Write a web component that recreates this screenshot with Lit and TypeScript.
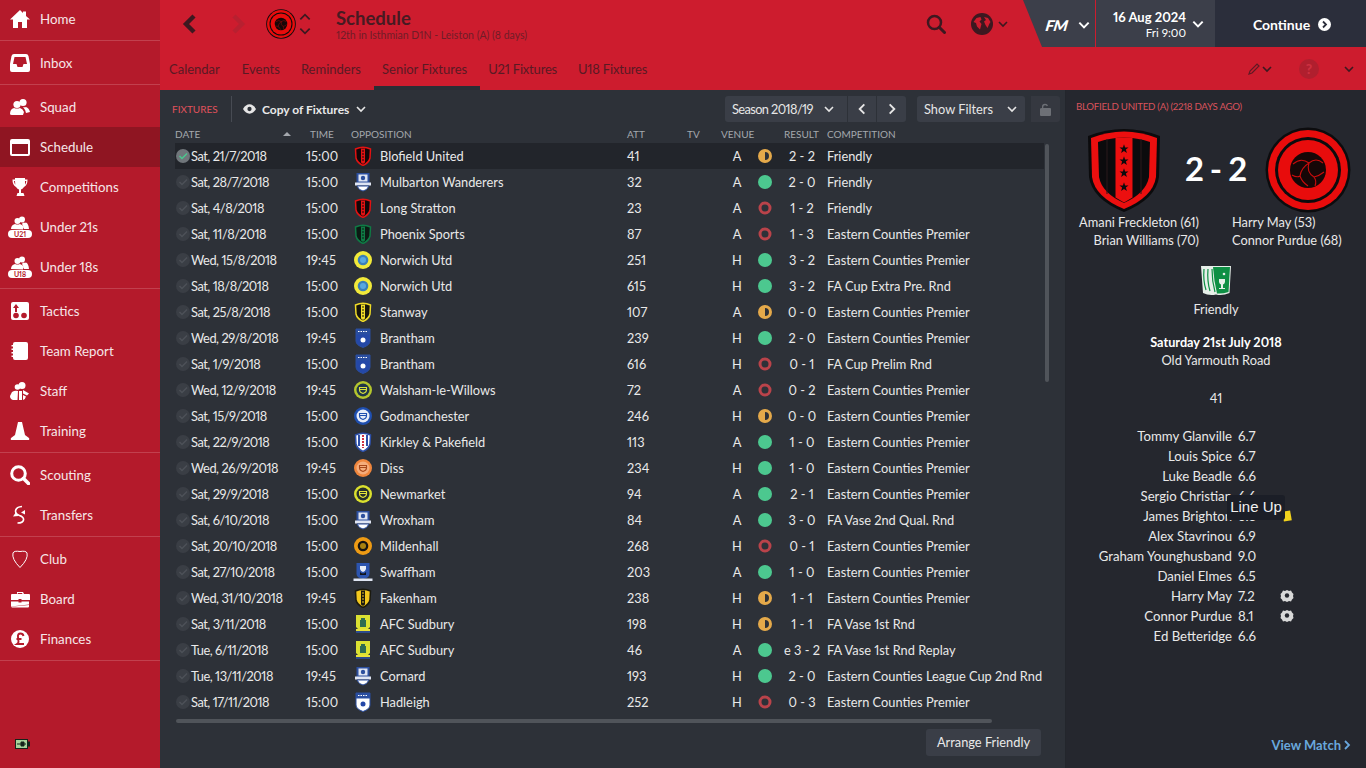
import { LitElement, html, css, svg } from 'lit';
import { customElement } from 'lit/decorators.js';

const chevron = (dir: 'down' | 'up' | 'left' | 'right', size = 12, color = 'currentColor', w = 2) => {
  const d = {
    down: 'M2 4l4 4 4-4',
    up: 'M2 8l4-4 4 4',
    left: 'M8 2L4 6l4 4',
    right: 'M4 2l4 4-4 4',
  }[dir];
  return html`<svg width=${size} height=${size} viewBox="0 0 12 12" fill="none" stroke=${color} stroke-width=${w}><path d=${d} /></svg>`;
};

const navIcons: Record<string, unknown> = {
  home: html`<svg width="20" height="20" viewBox="0 0 20 20" fill="#fff"><path d="M10 1L0 10.500h3V19h5v-6h4v6h5v-8.500h3L16 7V2.500h-3V4z"/></svg>`,
  inbox: html`<svg width="20" height="20" viewBox="0 0 20 20" fill="#fff"><path fill-rule="evenodd" d="M4 1h12q2 0 2.500 2L20 11v6q0 2-2 2H2q-2 0-2-2v-6l1.500-8Q2 1 4 1zm.500 3L3 11h3.500l1 3h5l1-3H17l-1.500-7z"/></svg>`,
  squad: html`<svg width="20" height="20" viewBox="0 0 20 20" fill="#fff"><circle cx="13" cy="5.500" r="3.600"/><circle cx="7" cy="7.500" r="3.600"/><path d="M0 17q0-5 4-6 3 1 6 0 3 1 4 4l-1 3H2q-2 0-2-1zM13 10q2 .5 3 0 3 1 4 5l-4 1q-1-4-3-6z"/></svg>`,
  schedule: html`<svg width="20" height="20" viewBox="0 0 20 20"><path fill="#fff" fill-rule="evenodd" d="M2 2h16q2 0 2 2v13q0 2-2 2H2q-2 0-2-2V4q0-2 2-2zm0 5v10h16V7z"/></svg>`,
  trophy: html`<svg width="20" height="20" viewBox="0 0 20 20" fill="#fff"><path fill-rule="evenodd" d="M5 1h10v1.500h2.500q.2 5.500-3.500 7.500-1.500 2-3 2.500V16h2.500l1 3H6.500l1-3H9v-3.500Q7.500 12 6 10 2.300 8 2.500 2.500H5zm0 3H4q.2 2.500 1.300 3.800zm10 0v3.800q1.100-1.300 1.300-3.800z"/></svg>`,
  tactics: html`<svg width="20" height="20" viewBox="0 0 20 20"><rect width="18" height="18" x="1" y="1" rx="2" fill="#fff"/><path d="M6 3l3 4H7v4H5V7H3z" fill="#b41a2b"/><circle cx="6" cy="14.500" r="2.800" fill="#b41a2b"/><circle cx="14" cy="14.500" r="2.800" fill="#b41a2b"/></svg>`,
  report: html`<svg width="20" height="20" viewBox="0 0 20 20" fill="#fff"><path d="M5 1h11q2 0 2 2v14q0 2-2 2H5q-2 0-2-2v-1H1.500v-1.500H3v-2H1.500V11H3V9H1.500V7.500H3v-2H1.500V4H3V3q0-2 2-2z"/></svg>`,
  staff: html`<svg width="20" height="20" viewBox="0 0 20 20" fill="#fff"><circle cx="12" cy="4.500" r="3.500"/><circle cx="7.500" cy="6" r="2.800"/><path d="M2 11q3-2 6-1l-.5 9H3q-3-1-3-4zM9 10h3v9H9zM13 9l6 3.500-2 2-4-2zM13 14l3 1.500q-.5 2.500-3 3.500z"/></svg>`,
  cone: html`<svg width="20" height="20" viewBox="0 0 20 20" fill="#fff"><path d="M8 1h4l3 13 4 3q1 2-1 2H2q-2 0-1-2l4-3z"/></svg>`,
  search: html`<svg width="20" height="20" viewBox="0 0 20 20" fill="none" stroke="#fff"><circle cx="8.500" cy="8.500" r="6.800" stroke-width="3"/><path d="M13.500 13.500l5 5" stroke-width="3.500" stroke-linecap="round"/></svg>`,
  transfers: html`<svg width="20" height="20" viewBox="0 0 20 20" fill="none" stroke="#fff" stroke-width="1.600"><path d="M12 1.500Q6 2 5.500 6q0 3 4 4.500 4.500 1.500 4 4.500-.5 3-6 3"/><path d="M3 11.500l5.500-.5-2.500-4zM15 9.500l-4-2 4-2.500z" fill="#fff" stroke="none"/></svg>`,
  club: html`<svg width="20" height="20" viewBox="0 0 20 20" fill="none" stroke="#fff" stroke-width="1"><path d="M10 2.500Q4 1.500 3 4q-1.500 6 7 14.500Q18.500 10 17 4q-1-2.500-7-1.500z"/></svg>`,
  board: html`<svg width="20" height="20" viewBox="0 0 20 20" fill="#fff"><path fill-rule="evenodd" d="M7 3h6l1 2h5q1 0 1 1v5H11.500v-1h-3v1H1V6q0-1 1-1h5zm1 1l-.5 1h5L12 4zM1 12.500h7.500v1h3v-1H19v3L1 17.500zM1 17.800l18-1.800v1.500q0 1-1 1H2z"/></svg>`,
  finances: html`<svg width="20" height="20" viewBox="0 0 20 20"><circle cx="10" cy="10" r="9" fill="#fff"/><path d="M13.500 7Q13 4.500 10.500 4.500 7.500 4.500 8 8l.5 5q0 1-1.500 2h7M6.500 10h5" fill="none" stroke="#b41a2b" stroke-width="1.900"/></svg>`,
};

const youthIcon = (label: string) => html`
  <svg width="24" height="22" viewBox="0 0 24 22" fill="#fff">
    <circle cx="14" cy="3.500" r="3"/><circle cx="9.500" cy="5" r="3"/>
    <path d="M3 13q0-4 4-5 2.500 1 5 0 3 1 3.500 3l-.5 2.500zM15 6.500q2 .5 3 0 2.500 1 3 6.500h-5q-.5-3-2-5z"/>
    <rect y="14" width="24" height="8" rx="4"/>
    <text x="12" y="20.500" text-anchor="middle" font-size="7" font-weight="700" font-family="Lato, sans-serif" fill="#b41a2b">${label}</text>
  </svg>`;

const shieldPath = 'M2.500 3Q10 -.5 17.500 3L17 12Q16 16.500 10 19.500 4 16.500 3 12Z';

type Crest = (typeof crests)[keyof typeof crests];

const stripeShield = (edge: string, fill: string, stripe: string) => html`
  <svg width="20" height="20" viewBox="0 0 20 20">
    <path d=${shieldPath} fill=${fill} stroke=${edge} stroke-width="1.500"/>
    <path d="M8 2.500h4v14l-2 1.500-2-1.500z" fill=${stripe}/>
    <path d="M9 5h2M9 8h2M9 11h2M9 14h2" stroke=${fill} stroke-width="1"/>
  </svg>`;

const ring = (outer: string, mid: string, inner: string) => html`
  <svg width="20" height="20" viewBox="0 0 20 20">
    <circle cx="10" cy="10" r="9" fill=${outer}/>
    <circle cx="10" cy="10" r="5.300" fill=${mid}/>
    <circle cx="10" cy="10" r="3" fill=${inner}/>
  </svg>`;

const ringCup = (outer: string, inner: string, cup: string) => html`
  <svg width="20" height="20" viewBox="0 0 20 20">
    <circle cx="10" cy="10" r="9" fill=${outer}/>
    <circle cx="10" cy="10" r="6.500" fill=${inner}/>
    <path d="M6.500 7.500h7v2.500q0 2.500-3.500 3.500-3.500-1-3.500-3.500z" fill="none" stroke=${cup} stroke-width="1.100"/>
    <path d="M6.500 9.500h7" stroke=${cup} stroke-width="1"/>
  </svg>`;

const bannerCrest = html`
  <svg width="20" height="20" viewBox="0 0 20 20">
    <path d="M3.500 1h13v10h-13z" fill="#2c4f9e"/>
    <rect x="5.500" y="2.500" width="9" height="7" fill="#dfe5f3"/>
    <circle cx="10" cy="6" r="2.200" fill="#2c4f9e"/>
    <path d="M2 10.500h16v3H2z" fill="#dfe5f3"/>
    <path d="M4 14h12l-2.500 3.500-3.500 1.500-3.500-1.500z" fill="#fff" stroke="#2c4f9e"/>
  </svg>`;

const blueShield = (top: string, body: string, dot: string) => html`
  <svg width="20" height="20" viewBox="0 0 20 20">
    <path d="M3 1h14v12q0 4-7 6.500Q3 17 3 13z" fill=${body} stroke="#2a4ea0"/>
    <path d="M3 1h14v5.500H3z" fill=${top}/>
    <path d="M5 3.500h10" stroke="#fff" stroke-dasharray="1.500 1"/>
    <circle cx="10" cy="12" r="2.500" fill=${dot}/>
  </svg>`;

const crests = {
  blofield: stripeShield('#e31212', '#120608', '#e31212'),
  longStratton: stripeShield('#e31212', '#120608', '#e31212'),
  phoenix: stripeShield('#0f7a45', '#0c1a14', '#0f7a45'),
  stanway: stripeShield('#f0dc28', '#16150c', '#f0dc28'),
  fakenham: stripeShield('#1b1a10', '#f2c81e', '#1b1a10'),
  mulbarton: bannerCrest,
  norwich: ring('#f2ea3a', '#3a7fb8', '#58a8e0'),
  brantham: blueShield('#2a4ea0', '#2448a8', '#fff'),
  hadleigh: blueShield('#2a4ea0', '#fff', '#2448a8'),
  walsham: ringCup('#b4c62e', '#1f3648', '#d8e23c'),
  god: ringCup('#1f4fb0', '#e8edf8', '#1f4fb0'),
  diss: ringCup('#f0863c', '#f5ad7b', '#a8481a'),
  newmarket: ringCup('#dbe12e', '#27302c', '#e6e63a'),
  mildenhall: ring('#ee9b14', '#181410', '#a9810f'),
  kirkley: html`
    <svg width="20" height="20" viewBox="0 0 20 20">
      <path d=${shieldPath} fill="#fff" stroke="#2c4fa8" stroke-width="1.500"/>
      <path d="M6 3v11M14 3v11" stroke="#2c4fa8" stroke-width="2"/>
      <path d="M10 3v13" stroke="#d03040" stroke-width="2" stroke-dasharray="2 1"/>
    </svg>`,
  swaffham: html`
    <svg width="20" height="20" viewBox="0 0 20 20">
      <path d="M3.500 1h13v11q0 4-6.500 5-6.500-1-6.500-5z" fill="#2c54ae"/>
      <path d="M7 4h6v3q-1 3-3 3t-3-3z" fill="#e8edf8"/>
      <path d="M7 10q3 3 6 0v3H7z" fill="#10131c"/>
      <path d="M.5 16.500h19v2.500H.5z" fill="#dfe5f3"/>
    </svg>`,
  sudbury: html`
    <svg width="20" height="20" viewBox="0 0 20 20">
      <path d="M3 1h14v12l-3 3H6l-3-3z" fill="#dbe132"/>
      <path d="M8 4h4v2h1v7H7V6h1z" fill="#2e6b52"/>
      <path d="M3 15h14v2H3z" fill="#e8e23a"/>
      <path d="M3 17h14v2H3z" fill="#2c4a8c"/>
    </svg>`,
};

type Row = [string, string, Crest, string, string, 'A' | 'H', 'w' | 'd' | 'l', string, string];

const EC = 'Eastern Counties Premier';
const rows: Row[] = [
  ['Sat, 21/7/2018', '15:00', crests.blofield, 'Blofield United', '41', 'A', 'd', '2 - 2', 'Friendly'],
  ['Sat, 28/7/2018', '15:00', crests.mulbarton, 'Mulbarton Wanderers', '32', 'A', 'w', '2 - 0', 'Friendly'],
  ['Sat, 4/8/2018', '15:00', crests.longStratton, 'Long Stratton', '23', 'A', 'l', '1 - 2', 'Friendly'],
  ['Sat, 11/8/2018', '15:00', crests.phoenix, 'Phoenix Sports', '87', 'A', 'l', '1 - 3', EC],
  ['Wed, 15/8/2018', '19:45', crests.norwich, 'Norwich Utd', '251', 'H', 'w', '3 - 2', EC],
  ['Sat, 18/8/2018', '15:00', crests.norwich, 'Norwich Utd', '615', 'H', 'w', '3 - 2', 'FA Cup Extra Pre. Rnd'],
  ['Sat, 25/8/2018', '15:00', crests.stanway, 'Stanway', '107', 'A', 'd', '0 - 0', EC],
  ['Wed, 29/8/2018', '19:45', crests.brantham, 'Brantham', '239', 'H', 'w', '2 - 0', EC],
  ['Sat, 1/9/2018', '15:00', crests.brantham, 'Brantham', '616', 'H', 'l', '0 - 1', 'FA Cup Prelim Rnd'],
  ['Wed, 12/9/2018', '19:45', crests.walsham, 'Walsham-le-Willows', '72', 'A', 'l', '0 - 2', EC],
  ['Sat, 15/9/2018', '15:00', crests.god, 'Godmanchester', '246', 'H', 'd', '0 - 0', EC],
  ['Sat, 22/9/2018', '15:00', crests.kirkley, 'Kirkley & Pakefield', '113', 'A', 'w', '1 - 0', EC],
  ['Wed, 26/9/2018', '19:45', crests.diss, 'Diss', '234', 'H', 'w', '1 - 0', EC],
  ['Sat, 29/9/2018', '15:00', crests.newmarket, 'Newmarket', '94', 'A', 'w', '2 - 1', EC],
  ['Sat, 6/10/2018', '15:00', crests.mulbarton, 'Wroxham', '84', 'A', 'w', '3 - 0', 'FA Vase 2nd Qual. Rnd'],
  ['Sat, 20/10/2018', '15:00', crests.mildenhall, 'Mildenhall', '268', 'H', 'l', '0 - 1', EC],
  ['Sat, 27/10/2018', '15:00', crests.swaffham, 'Swaffham', '203', 'A', 'w', '1 - 0', EC],
  ['Wed, 31/10/2018', '19:45', crests.fakenham, 'Fakenham', '238', 'H', 'd', '1 - 1', EC],
  ['Sat, 3/11/2018', '15:00', crests.sudbury, 'AFC Sudbury', '198', 'H', 'd', '1 - 1', 'FA Vase 1st Rnd'],
  ['Tue, 6/11/2018', '15:00', crests.sudbury, 'AFC Sudbury', '46', 'A', 'w', 'e 3 - 2', 'FA Vase 1st Rnd Replay'],
  ['Tue, 13/11/2018', '19:45', crests.mulbarton, 'Cornard', '193', 'H', 'w', '2 - 0', 'Eastern Counties League Cup 2nd Rnd'],
  ['Sat, 17/11/2018', '15:00', crests.hadleigh, 'Hadleigh', '252', 'H', 'l', '0 - 3', EC],
];

const players: [string, string, string?][] = [
  ['Tommy Glanville', '6.7'],
  ['Louis Spice', '6.7'],
  ['Luke Beadle', '6.6'],
  ['Sergio Christian', '6.6'],
  ['James Brighton', '6.8', 'card'],
  ['Alex Stavrinou', '6.9'],
  ['Graham Younghusband', '9.0'],
  ['Daniel Elmes', '6.5'],
  ['Harry May', '7.2', 'ball'],
  ['Connor Purdue', '8.1', 'ball'],
  ['Ed Betteridge', '6.6'],
];

const navGroups: { label: string; icon: unknown; active?: boolean }[][] = [
  [{ label: 'Home', icon: navIcons.home }],
  [{ label: 'Inbox', icon: navIcons.inbox }],
  [
    { label: 'Squad', icon: navIcons.squad },
    { label: 'Schedule', icon: navIcons.schedule, active: true },
    { label: 'Competitions', icon: navIcons.trophy },
    { label: 'Under 21s', icon: youthIcon('U21') },
    { label: 'Under 18s', icon: youthIcon('U18') },
  ],
  [
    { label: 'Tactics', icon: navIcons.tactics },
    { label: 'Team Report', icon: navIcons.report },
    { label: 'Staff', icon: navIcons.staff },
    { label: 'Training', icon: navIcons.cone },
  ],
  [
    { label: 'Scouting', icon: navIcons.search },
    { label: 'Transfers', icon: navIcons.transfers },
  ],
  [
    { label: 'Club', icon: navIcons.club },
    { label: 'Board', icon: navIcons.board },
    { label: 'Finances', icon: navIcons.finances },
  ],
];

const ballBadge = (size: number) => html`
  <svg width=${size} height=${size} viewBox="0 0 86 86">
    <circle cx="43" cy="43" r="42.500" fill="#0c0c0e"/>
    <circle cx="43" cy="43" r="40" fill="#e80c0c"/>
    <circle cx="43" cy="43" r="33" fill="#0c0c0e"/>
    <circle cx="43" cy="43" r="30" fill="#e80c0c"/>
    <circle cx="43" cy="43" r="18" fill="#160707"/>
    <g fill="none" stroke="#c80c0c" stroke-width="1.100">
      <path d="M28 37q8-7 16-1 7-6 14 0M44 36q-3 9 5 14 3 4 1 9M49 50q5-1 10-5M44 36q-8 5-9 13-3 2-8-1M35 49q2 6 8 10"/>
    </g>
  </svg>`;

const starsBadge = html`
  <svg width="76" height="86" viewBox="0 0 76 86">
    <path d="M2 9Q38 -5 74 9L73 50Q70 72 38 85 6 72 3 50Z" fill="#0b0b0d"/>
    <path d="M5 11Q38 -2 71 11L70 50Q67 70 38 82 9 70 6 50Z" fill="#ec0f0f"/>
    <path d="M12 15Q38 6 64 15L63 50Q60 66 38 76 16 66 13 50Z" fill="#0b0b0d"/>
    <path d="M21 12v55M55 12v55" stroke="#2a1a1c" fill="none"/>
    <path d="M29.500 10.500h17v60l-8.500 5-8.500-5z" fill="#ec0f0f"/>
    ${[22, 34, 46, 60].map(
      (y) => svg`<path transform="translate(38 ${y}) scale(.62)" d="M0-7.500l1.800 5h5.500L3 .8 4.700 6.500 0 3.200-4.700 6.500-3 .8-7.300-2.500h5.500z" fill="#0b0b0d"/>`
    )}
  </svg>`;

const friendlyBadge = html`
  <svg width="32" height="31" viewBox="0 0 32 31">
    <path d="M1 1h30l-1.500 27q-7 3-13.500 1.500Q9 31 3 28z" fill="#e7efe9"/>
    <path d="M13 2h17l-1.500 25q-6 2-11.500 1.500-3-12-4-26.500z" fill="#0e8f44"/>
    <path d="M4 4q-1 12 2 21M8 4q-1 12 2 22M12 4q0 12 3 23" fill="none" stroke="#0e8f44" stroke-width="1.200"/>
    <path d="M19 14h6v3q-.5 2-2 2.500V23h2v1h-6v-1h2v-3.500q-1.500-.5-2-2.500z" fill="#e7efe9"/>
    <circle cx="24" cy="9" r="1.300" fill="#e7efe9"/>
  </svg>`;

const miniBall = html`<svg width="14" height="14" viewBox="0 0 14 14"><path d="M7 1l2 1 2-.5 1 2 1.500 1.500-.5 2 .5 2-1.500 1.500-1 2-2-.5-2 1-2-1-2 .5-1-2L.500 9l.5-2-.5-2L2 3.500l1-2 2 .5z" fill="#d8d8d8"/><circle cx="7" cy="6.500" r="2.200" fill="#25272e"/></svg>`;

@customElement('fm-sidebar')
class FmSidebar extends LitElement {
  static styles = css`
    :host {
      display: flex;
      flex-direction: column;
      width: 160px;
      height: 768px;
      background: #b41a2b;
      overflow: hidden;
    }
    .group {
      padding: 2px 0 1px;
      border-bottom: 1px solid #c2404e;
    }
    .group:first-child {
      margin-top: -1px;
      padding-top: 0;
    }
    .group:last-of-type {
      border-bottom: none;
    }
    .item {
      display: flex;
      align-items: center;
      height: 40px;
      color: #f6e6e8;
      font-size: 13.300px;
    }
    .item.active {
      background: #8f1522;
    }
    .icon {
      width: 40px;
      display: flex;
      justify-content: center;
      flex: none;
    }
    .battery {
      margin-top: auto;
      padding: 0 0 19px 15px;
      line-height: 0;
    }
  `;

  render() {
    return html`
      ${navGroups.map(
        (group) => html`<div class="group">
          ${group.map(
            (it) => html`<div class="item ${it.active ? 'active' : ''}"><span class="icon">${it.icon}</span>${it.label}</div>`
          )}
        </div>`
      )}
      <div class="battery">
        <svg width="15" height="10" viewBox="0 0 15 10">
          <rect width="13" height="10" fill="#14241a"/>
          <rect x="1" y="1" width="11" height="8" fill="#a7d39b"/>
          <rect x="13" y="2.500" width="2" height="5" fill="#14241a"/>
          <path d="M2 5h9M6 3h3v4H6z" stroke="#14241a" fill="#14241a"/>
        </svg>
      </div>
    `;
  }
}

@customElement('fm-header')
class FmHeader extends LitElement {
  static styles = css`
    :host {
      display: block;
      background: #cd1c2e;
      height: 90px;
      color: #3a1a20;
    }
    .top {
      display: flex;
      height: 50px;
    }
    .nav {
      display: flex;
      align-items: center;
      padding: 0 0 3px 18px;
    }
    .forward {
      margin-left: 24px;
      margin-right: 16px;
      line-height: 0;
    }
    .updown {
      display: flex;
      flex-direction: column;
      margin-left: 2px;
      line-height: 0;
    }
    .title {
      margin-left: 24px;
      padding-top: 8px;
    }
    h1 {
      margin: 0;
      font-size: 18.500px;
      font-weight: 700;
      line-height: 21px;
      color: #471a22;
    }
    .sub {
      font-size: 10.500px;
      line-height: 13px;
      margin-top: 0;
      color: #701c28;
    }
    .tools {
      margin-left: auto;
      display: flex;
      align-items: center;
      gap: 25px;
      padding-bottom: 3px;
      margin-right: 14px;
    }
    .globe {
      display: flex;
      align-items: center;
      gap: 4px;
    }
    .status {
      display: flex;
      height: 47px;
      width: 343px;
      color: #fff;
    }
    .fm {
      width: 72px;
      padding: 2px 0 0 23px;
      box-sizing: border-box;
      background: #3c3f4a;
      clip-path: polygon(0 0, 100% 0, 100% 100%, 19px 100%);
      display: flex;
      align-items: center;
      gap: 9px;
      font-size: 15px;
      font-weight: 900;
    }
    .fm i {
      display: inline-block;
      font-style: normal;
      transform: skewX(-16deg);
      letter-spacing: -0.500px;
    }
    .date {
      width: 119px;
      margin-left: 1px;
      background: #3c3f4a;
      display: flex;
      align-items: center;
      justify-content: flex-end;
      gap: 5px;
      padding: 1px 10px 0 0;
      box-sizing: border-box;
    }
    .date div {
      text-align: right;
    }
    .date b {
      display: block;
      font-size: 13px;
      line-height: 17px;
    }
    .date span {
      font-size: 11.500px;
      line-height: 14px;
      display: block;
    }
    .continue {
      flex: 1;
      background: #2b2e3b;
      display: flex;
      align-items: center;
      justify-content: center;
      gap: 8px;
      font-size: 14px;
      font-weight: 700;
      padding: 2px 0 0 3px;
    }
    .bottom {
      display: flex;
      height: 40px;
    }
    .tab {
      display: flex;
      align-items: center;
      padding: 0 13px 2px 8px;
      font-size: 13px;
      color: #591a24;
      box-sizing: border-box;
    }
    .tab:first-child {
      margin-left: 1px;
      padding-right: 14px;
    }
    .tab.num {
      letter-spacing: -0.200px;
    }
    .tab.on {
      border-bottom: 4px solid #2a2d35;
      padding-top: 2px;
      padding-bottom: 0;
    }
    .side {
      margin-left: auto;
      display: flex;
      align-items: center;
      padding: 0 11px 2px 0;
    }
    .pencil {
      display: flex;
      align-items: center;
      gap: 1px;
      margin-right: 26px;
    }
    .help {
      width: 20px;
      height: 20px;
      border-radius: 50%;
      background: #b01f2e;
      color: #cd3040;
      font-size: 14px;
      font-weight: 900;
      text-align: center;
      line-height: 20px;
      margin-right: 24px;
    }
  `;

  render() {
    const dark = '#3d1820';
    return html`
      <div class="top">
        <div class="nav">
          ${chevron('left', 24, dark, 2.200)}
          <span class="forward">${chevron('right', 24, '#b82030', 2.200)}</span>
          ${ballBadge(30)}
          <span class="updown">${chevron('up', 14, dark, 1.500)}${chevron('down', 14, dark, 1.500)}</span>
        </div>
        <div class="title">
          <h1>Schedule</h1>
          <div class="sub">12th in Isthmian D1N - Leiston (A) (8 days)</div>
        </div>
        <div class="tools">
          <svg width="20" height="20" viewBox="0 0 20 20" fill="none" stroke=${dark}><circle cx="8.500" cy="8.500" r="6.500" stroke-width="2.500"/><path d="M13.500 13.500l5 5" stroke-width="3" stroke-linecap="round"/></svg>
          <span class="globe">
            <svg width="22" height="22" viewBox="0 0 22 22"><circle cx="11" cy="11" r="11" fill=${dark}/><path d="M2.500 9l3-4 4-1 1 2.500-2 2 2 2.500-1.500 5.500-3-3-1-3.500zM13 4l4 1 2.500 4-1 1.500-2 4.500-2-3-1.500-3.500 2-1.500z" fill="#cd1c2e"/></svg>
            ${chevron('down', 12, dark, 1.600)}
          </span>
        </div>
        <div class="status">
          <div class="fm"><i>FM</i> ${chevron('down', 14, '#fff', 1.700)}</div>
          <div class="date">
            <div><b>16 Aug 2024</b><span>Fri 9:00</span></div>
            ${chevron('down', 14, '#fff', 1.700)}
          </div>
          <div class="continue">
            Continue
            <svg width="13" height="13" viewBox="0 0 13 13"><circle cx="6.500" cy="6.500" r="6.500" fill="#fff"/><path d="M5 3.500l3 3-3 3" fill="none" stroke="#2b2e3b" stroke-width="1.800"/></svg>
          </div>
        </div>
      </div>
      <div class="bottom">
        <div class="tab">Calendar</div>
        <div class="tab">Events</div>
        <div class="tab">Reminders</div>
        <div class="tab on">Senior Fixtures</div>
        <div class="tab num">U21 Fixtures</div>
        <div class="tab num">U18 Fixtures</div>
        <div class="side">
          <span class="pencil">
            <svg width="12" height="12" viewBox="0 0 12 12" fill="none" stroke="#5f1a24" stroke-width="1.200"><path d="M1 11l1-3 7-7 2 2-7 7z"/></svg>
            ${chevron('down', 12, dark, 1.600)}
          </span>
          <span class="help">?</span>
          ${chevron('down', 12, dark, 1.600)}
        </div>
      </div>
    `;
  }
}

@customElement('fm-fixtures')
class FmFixtures extends LitElement {
  static styles = css`
    :host {
      display: flex;
      flex-direction: column;
      flex: 1;
      min-width: 0;
      background: #2d3138;
      color: #e9e9e9;
      font-size: 12.800px;
      border-right: 1px solid #23262c;
      position: relative;
    }
    .toolbar {
      display: flex;
      align-items: center;
      height: 38px;
      padding: 0 5px 0 12px;
      box-sizing: border-box;
    }
    .label {
      color: #e0525c;
      font-size: 10px;
      width: 59px;
    }
    .view {
      display: flex;
      align-items: center;
      height: 26px;
      border-left: 1px solid #474b53;
      padding-left: 11px;
      font-size: 12px;
      font-weight: 700;
      gap: 6px;
    }
    .controls {
      margin-left: auto;
      display: flex;
      gap: 6px;
    }
    .btns {
      display: flex;
      margin-right: 5px;
    }
    .btn {
      display: flex;
      align-items: center;
      justify-content: center;
      height: 26px;
      background: #3a3e47;
      font-size: 12.800px;
      color: #e6e6e6;
      border-right: 1px solid #2d3138;
      box-sizing: border-box;
    }
    .btn:first-child {
      border-radius: 3px 0 0 3px;
    }
    .btn:last-child {
      border-radius: 0 3px 3px 0;
      border-right: none;
    }
    .season {
      width: 123px;
      justify-content: space-between;
      padding: 0 12px 0 7px;
      letter-spacing: -0.600px;
    }
    .arrow {
      width: 29px;
    }
    .filters {
      width: 108px;
      border-radius: 3px;
      gap: 13px;
      border-right: none;
    }
    .lock {
      width: 29px;
      border-radius: 3px;
      border-right: none;
      background: #353840;
    }
    .row,
    .head {
      display: grid;
      grid-template-columns: 16px 115px 45px 29px 247px 60px 34px 32px 24px 50px 1fr;
      align-items: center;
      margin-left: 15px;
      width: 869px;
      box-sizing: border-box;
    }
    .head {
      margin-top: -2px;
      height: 17px;
      padding-bottom: 2px;
      font-size: 10px;
      color: #a4a8ad;
    }
    .head .date {
      grid-column: span 2;
      position: relative;
    }
    .sort {
      position: absolute;
      left: 108px;
      top: 4px;
      border: 4px solid transparent;
      border-top: none;
      border-bottom: 4px solid #a4a8ad;
    }
    .head .time {
      padding-left: 4px;
    }
    .head .res {
      padding-left: 7px;
    }
    .head .span2 {
      grid-column: span 2;
    }
    .row {
      height: 26px;
      padding-bottom: 1px;
    }
    .row.sel {
      background: #22252b;
    }
    .when {
      letter-spacing: -0.450px;
    }
    .check {
      width: 14px;
      height: 14px;
      border-radius: 50%;
      background: #3a3e45;
      display: flex;
      align-items: center;
      justify-content: center;
      margin-left: 1px;
    }
    .sel .check {
      background: #70767b;
    }
    .crest {
      line-height: 0;
      margin-left: 2px;
    }
    .venue,
    .result,
    .dot {
      text-align: center;
    }
    .dot {
      line-height: 0;
      display: flex;
      justify-content: center;
    }
    .comp {
      white-space: nowrap;
    }
    .vscroll {
      position: absolute;
      left: 885px;
      top: 54px;
      width: 4px;
      height: 238px;
      background: #50545a;
      border-radius: 2px;
    }
    .hscroll {
      margin: 4px 0 0 16px;
      width: 816px;
      height: 4px;
      background: #50545a;
      border-radius: 2px;
    }
    .footer {
      display: flex;
      justify-content: flex-end;
      padding: 6px 24px 0 0;
    }
    .arrange {
      width: 115px;
      height: 27px;
      line-height: 27px;
      background: #3a3e47;
      text-align: center;
      border-radius: 3px;
    }
  `;

  resultDot(kind: 'w' | 'd' | 'l') {
    if (kind === 'w') return html`<svg width="14" height="14"><circle cx="7" cy="7" r="7" fill="#4cc88f"/></svg>`;
    if (kind === 'l') return html`<svg width="14" height="14"><circle cx="7" cy="7" r="5" fill="none" stroke="#b9434a" stroke-width="3"/></svg>`;
    return html`<svg width="14" height="14"><circle cx="7" cy="7" r="7" fill="#e4a94a"/><path d="M7 3a4 4 0 0 1 0 8z" fill="#2d3138"/></svg>`;
  }

  render() {
    return html`
      <div class="toolbar">
        <span class="label">FIXTURES</span>
        <span class="view">
          <svg width="13" height="10" viewBox="0 0 14 10"><path d="M0 5q3-5 7-5t7 5q-3 5-7 5T0 5z" fill="#e6e6e6"/><circle cx="7" cy="5" r="2.300" fill="#2d3138"/></svg>
          <span>Copy of Fixtures</span>${chevron('down', 12, '#e6e6e6', 1.600)}
        </span>
        <div class="controls">
          <div class="btns">
            <div class="btn season">Season 2018/19 ${chevron('down', 12, '#e6e6e6', 1.600)}</div>
            <div class="btn arrow">${chevron('left', 14, '#e6e6e6', 1.600)}</div>
            <div class="btn arrow">${chevron('right', 14, '#e6e6e6', 1.600)}</div>
          </div>
          <div class="btn filters">Show Filters ${chevron('down', 12, '#e6e6e6', 1.600)}</div>
          <div class="btn lock">
            <svg width="11" height="13" viewBox="0 0 11 13" fill="#6d7076"><path d="M2 5V3.500Q2 1 5 .8q2.500 0 3 2l-1.300.4Q6.500 2 5 2.200 3.300 2.300 3.300 4v1H10q1 0 1 1v6q0 1-1 1H1q-1 0-1-1V6q0-1 2-1z"/></svg>
          </div>
        </div>
      </div>
      <div class="head">
        <span class="date">DATE<i class="sort"></i></span>
        <span class="time">TIME</span>
        <span class="span2">OPPOSITION</span>
        <span>ATT</span>
        <span>TV</span>
        <span class="span2">VENUE</span>
        <span class="res">RESULT</span>
        <span>COMPETITION</span>
      </div>
      ${rows.map(
        (r, i) => html`<div class="row ${i === 0 ? 'sel' : ''}">
          <span class="check">
            <svg width="10" height="10" viewBox="0 0 10 10" fill="none" stroke=${i === 0 ? '#4cc88f' : '#4d5158'} stroke-width="1.500"><path d="M1.500 5l2.500 2.500 5-5"/></svg>
          </span>
          <span class="when">${r[0]}</span>
          <span>${r[1]}</span>
          <span class="crest">${r[2]}</span>
          <span>${r[3]}</span>
          <span>${r[4]}</span>
          <span></span>
          <span class="venue">${r[5]}</span>
          <span class="dot">${this.resultDot(r[6])}</span>
          <span class="result">${r[7]}</span>
          <span class="comp">${r[8]}</span>
        </div>`
      )}
      <div class="vscroll"></div>
      <div class="hscroll"></div>
      <div class="footer"><div class="arrange">Arrange Friendly</div></div>
    `;
  }
}

@customElement('fm-match')
class FmMatch extends LitElement {
  static styles = css`
    :host {
      display: flex;
      flex-direction: column;
      width: 300px;
      flex: none;
      background: #25272e;
      color: #e9e9e9;
      font-size: 12.800px;
      position: relative;
      box-sizing: border-box;
    }
    .caption {
      color: #d9535c;
      font-size: 9.700px;
      letter-spacing: -0.270px;
      padding: 10px 0 0 10px;
      line-height: 12px;
    }
    .score {
      display: flex;
      align-items: center;
      justify-content: space-between;
      padding: 15px 15px 0 20px;
      line-height: 0;
    }
    .score b {
      font-size: 33px;
      line-height: 40px;
      color: #fff;
      padding-left: 5px;
      margin-top: -4px;
      word-spacing: -2px;
    }
    .scorers {
      display: grid;
      grid-template-columns: 133px 1fr;
      column-gap: 33px;
      line-height: 18px;
    }
    .scorers .l {
      text-align: right;
    }
    .center {
      text-align: center;
      line-height: 18px;
    }
    .friendly {
      margin-top: 16px;
      line-height: 0;
    }
    .friendly div {
      line-height: 18px;
      margin-top: 4px;
    }
    .when {
      margin-top: 15px;
    }
    .when b {
      font-size: 12.700px;
      display: block;
      color: #fff;
    }
    .crowd {
      margin-top: 20px;
    }
    .players {
      margin-top: 19px;
      font-size: 13.200px;
    }
    .player {
      display: flex;
      align-items: center;
      height: 20px;
    }
    .name {
      width: 166px;
      text-align: right;
    }
    .rating {
      margin-left: 6px;
      width: 42px;
    }
    .ev {
      line-height: 0;
    }
    .card {
      display: block;
      width: 8px;
      height: 10px;
      background: #f2d21c;
      transform: translate(3px, 0) rotate(-10deg);
    }
    .tooltip {
      position: absolute;
      left: 161px;
      top: 405px;
      width: 58px;
      height: 25px;
      background: #1b1e27;
      border-radius: 3px;
      color: #f0f0f0;
      font: 15px 'Liberation Sans', sans-serif;
      line-height: 24px;
      text-align: center;
    }
    .view {
      margin-top: auto;
      align-self: flex-end;
      padding: 0 13px 15px 0;
      color: #69a7dc;
      font-weight: 700;
      font-size: 13px;
      display: flex;
      align-items: center;
    }
  `;

  render() {
    return html`
      <div class="caption">BLOFIELD UNITED (A) (2218 DAYS AGO)</div>
      <div class="score">${starsBadge}<b>2 - 2</b>${ballBadge(86)}</div>
      <div class="scorers">
        <span class="l">Amani Freckleton (61)</span><span>Harry May (53)</span>
        <span class="l">Brian Williams (70)</span><span>Connor Purdue (68)</span>
      </div>
      <div class="center friendly">${friendlyBadge}<div>Friendly</div></div>
      <div class="center when"><b>Saturday 21st July 2018</b>Old Yarmouth Road</div>
      <div class="center crowd">41</div>
      <div class="players">
        ${players.map(
          (p) => html`<div class="player">
            <span class="name">${p[0]}</span>
            <span class="rating">${p[1]}</span>
            <span class="ev">${p[2] === 'ball' ? miniBall : p[2] === 'card' ? html`<i class="card"></i>` : ''}</span>
          </div>`
        )}
      </div>
      <div class="tooltip">Line Up</div>
      <div class="view">View Match ${chevron('right', 12, '#69a7dc', 1.800)}</div>
    `;
  }
}

@customElement('app-root')
export class AppRoot extends LitElement {
  static styles = css`
    :host {
      display: flex;
      width: 1366px;
      height: 768px;
      overflow: hidden;
      font-family: Lato, 'Open Sans', sans-serif;
      font-variant-numeric: proportional-nums;
      background: #2d3138;
    }
    main {
      flex: 1;
      display: flex;
      flex-direction: column;
      min-width: 0;
    }
    .body {
      display: flex;
      flex: 1;
      min-height: 0;
    }
  `;

  render() {
    return html`
      <fm-sidebar></fm-sidebar>
      <main>
        <fm-header></fm-header>
        <div class="body">
          <fm-fixtures></fm-fixtures>
          <fm-match></fm-match>
        </div>
      </main>
    `;
  }
}
